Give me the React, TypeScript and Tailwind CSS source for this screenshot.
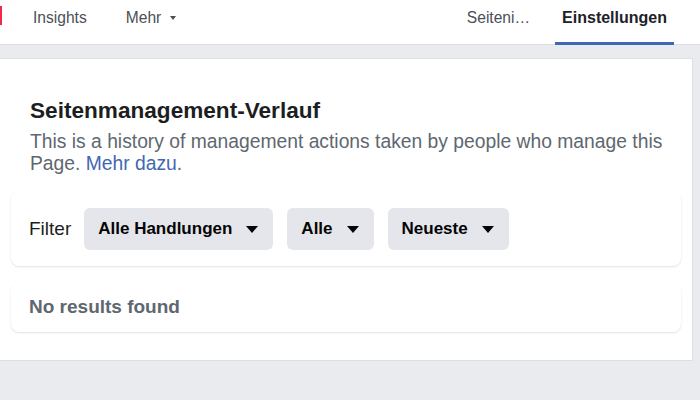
import { ReactNode } from 'react'

function Caret({ className = '' }: { className?: string }) {
  return (
    <svg width="12" height="7" viewBox="0 0 12 7" className={className}>
      <path d="M0 0h12L6 7z" fill="currentColor" />
    </svg>
  )
}

function FilterButton({ children }: { children: ReactNode }) {
  return (
    <button className="flex h-[42px] items-center gap-[14px] rounded-md bg-[#e4e6eb] pl-[14px] pr-[15px] text-[17px] font-bold text-[#050505]">
      {children}
      <Caret className="text-[#050505]" />
    </button>
  )
}

export default function App() {
  return (
    <div className="min-h-[400px] bg-[#e9ebee] font-['Liberation_Sans',Arial,sans-serif]">
      <nav className="relative flex h-[45px] items-stretch border-b border-[#dddfe2] bg-white text-[15.6px] leading-[20px] text-[#4b4f56]">
        <div className="mt-[6px] h-[19px] w-[2px] bg-[#f02849]" />
        <div className="pt-[8px] pl-[31px]">Insights</div>
        <div className="flex h-[28px] items-center gap-[9px] pt-[8px] pl-[39px]">
          <span>Mehr</span>
          <svg width="6" height="4" viewBox="0 0 6 4" className="mt-[-1px]">
            <path d="M0 0h6L3 4z" fill="#4b4f56" />
          </svg>
        </div>
        <div className="flex-1" />
        <div className="pt-[8px] pr-[25px]">Seiteni…</div>
        <div className="relative mr-[26px] px-[7px] pt-[8px] text-[16px] font-bold text-[#1d2129]">
          Einstellungen
          <div className="absolute bottom-[-1px] left-0 right-0 h-[3px] bg-[#4267b2]" />
        </div>
      </nav>
      <div className="pt-[13px] pb-[40px]">
        <div className="mr-[7px] border-y border-r border-[#dddfe2] bg-white px-[11px] pt-[40px] pb-[28px]">
          <div className="pl-[19px]">
            <h2 className="text-[22.6px] font-bold leading-[24px] text-[#1c1e21]">Seitenmanagement-Verlauf</h2>
            <p className="mt-[8px] pr-[8px] text-[19.3px] leading-[22px] text-[#606770]">
              This is a history of management actions taken by people who manage this Page.{' '}
              <a className="text-[#4267b2]">Mehr dazu</a>.
            </p>
          </div>
          <div className="mt-[16px] flex items-center gap-[14px] rounded-lg bg-white pt-[17px] pb-[16px] pl-[18px] shadow-[0_1px_2px_rgba(0,0,0,0.12)]">
            <span className="mr-[-1px] text-[19px] text-[#1c1e21]">Filter</span>
            <FilterButton>Alle Handlungen</FilterButton>
            <FilterButton>Alle</FilterButton>
            <FilterButton>Neueste</FilterButton>
          </div>
          <div className="mt-[17px] flex h-[49px] items-center rounded-lg bg-white pl-[18px] shadow-[0_1px_2px_rgba(0,0,0,0.12)]">
            <span className="text-[19px] font-bold text-[#606770]">No results found</span>
          </div>
        </div>
      </div>
    </div>
  )
}
